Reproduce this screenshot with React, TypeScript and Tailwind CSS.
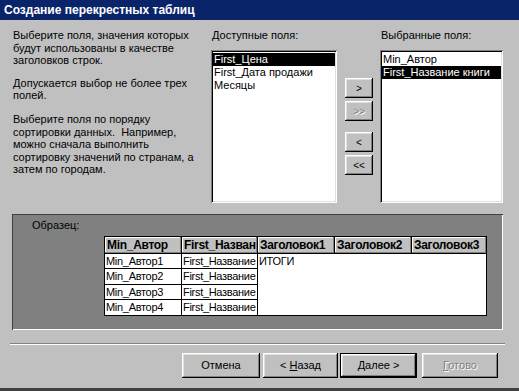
const raised =
  'shadow-[inset_-1px_-1px_#000,inset_1px_1px_#fff,inset_-2px_-2px_#808080,inset_2px_2px_#dfdfdf]';
const sunken =
  'shadow-[inset_1px_1px_#808080,inset_-1px_-1px_#fff,inset_2px_2px_#000,inset_-2px_-2px_#dfdfdf]';
const headerCell =
  'bg-[#c0c0c0] shadow-[inset_-1px_-1px_#808080,inset_1px_1px_#fff] px-[2px] font-bold text-[12px] tracking-[-0.3px] leading-[16px] whitespace-nowrap overflow-hidden';
const bodyCell = 'bg-white px-[1px] leading-[14px] tracking-[-0.3px] whitespace-nowrap overflow-hidden';
const disabledText = 'text-[#808080] [text-shadow:1px_1px_0_#fff]';

function ListBox({ items, selected }: { items: string[]; selected: number }) {
  return (
    <div className={`h-[153px] bg-white p-[2px] pt-[3px] ${sunken}`}>
      {items.map((it, i) => (
        <div
          key={it}
          className={`h-[13px] leading-[13px] pl-[1px] whitespace-nowrap ${
            i === selected ? 'bg-black text-white' : ''
          }`}
        >
          {it}
        </div>
      ))}
    </div>
  );
}

function MoveButton({ label, disabled }: { label: string; disabled?: boolean }) {
  return (
    <div
      className={`w-[28px] h-[20px] flex items-center justify-center text-[10px] ${raised} ${
        disabled ? disabledText : ''
      }`}
    >
      {label}
    </div>
  );
}

function WizardButton({
  children,
  isDefault,
  disabled,
  className = '',
}: {
  children: React.ReactNode;
  isDefault?: boolean;
  disabled?: boolean;
  className?: string;
}) {
  return (
    <div
      className={`h-[25px] flex items-center justify-center ${className} ${
        isDefault ? 'border border-black' : ''
      } ${disabled ? disabledText : ''}`}
    >
      <div className={`w-full h-full flex items-center justify-center ${raised}`}>
        <span className="whitespace-pre">{children}</span>
      </div>
    </div>
  );
}

const ROWS = ['Min_Автор1', 'Min_Автор2', 'Min_Автор3', 'Min_Автор4'];

export default function App() {
  return (
    <div className="w-[519px] h-[391px] bg-[#c0c0c0] flex flex-col overflow-hidden font-['Liberation_Sans',Arial,sans-serif] text-[11px] text-black border-b-[3px] border-[#404040]">
      <div className="h-[20px] shrink-0 bg-[#0a246a] text-white font-bold text-[12px] pl-[4px] flex items-center">
        Создание перекрестных таблиц
      </div>

      <div className="flex pt-[9px]">
        <div className="w-[211px] pl-[13px] leading-[12.6px]">
          <p>
            Выберите поля, значения которых
            <br />
            будут использованы в качестве
            <br />
            заголовков строк.
          </p>
          <p className="mt-[10px]">
            Допускается выбор не более трех
            <br />
            полей.
          </p>
          <p className="mt-[11px]">
            Выберите поля по порядку
            <br />
            {'сортировки данных.\u00a0 Например,'}
            <br />
            можно сначала выполнить
            <br />
            сортировку значений по странам, а
            <br />
            затем по городам.
          </p>
        </div>

        <div className="w-[126px]">
          <div className="h-[13px] leading-[13px] pl-[1px] mb-[8px]">Доступные поля:</div>
          <ListBox items={['First_Цена', 'First_Дата продажи', 'Месяцы']} selected={0} />
        </div>

        <div className="ml-[8px] pt-[49px] flex flex-col">
          <MoveButton label=">" />
          <div className="mt-[3px]">
            <MoveButton label=">>" disabled />
          </div>
          <div className="mt-[11px]">
            <MoveButton label="<" />
          </div>
          <div className="mt-[3px]">
            <MoveButton label="<<" />
          </div>
        </div>

        <div className="w-[123px] ml-[7px]">
          <div className="h-[13px] leading-[13px] pl-[1px] mb-[8px]">Выбранные поля:</div>
          <ListBox items={['Min_Автор', 'First_Название книги']} selected={1} />
        </div>
      </div>

      <div className="ml-[12px] mt-[11px] w-[491px] h-[116px] bg-[#808080] shadow-[inset_1px_1px_#404040,inset_-1px_-1px_#fff] pt-[5px] pl-[20px]">
        <div className="leading-[13px]">Образец:</div>
        <div className="ml-[72px] mt-[4px] w-[383px] grid grid-cols-[76px_75px_76px_76px_74px] grid-rows-[16px_14px_15px_14px_15px] gap-px border border-black bg-black">
          <div className={headerCell}>Min_Автор</div>
          <div className={headerCell}>First_Назван</div>
          <div className={headerCell}>Заголовок1</div>
          <div className={headerCell}>Заголовок2</div>
          <div className={headerCell}>Заголовок3</div>

          <div className={bodyCell}>{ROWS[0]}</div>
          <div className={bodyCell}>First_Название</div>
          <div className={`${bodyCell} col-span-3 row-span-4`}>ИТОГИ</div>
          {ROWS.slice(1).map((r) => (
            <div key={r} className="contents">
              <div className={bodyCell}>{r}</div>
              <div className={bodyCell}>First_Название</div>
            </div>
          ))}
        </div>
      </div>

      <div className="ml-[10px] mt-[13px] w-[495px] h-[2px] border-t border-[#808080] border-b border-b-white" />

      <div className="flex mt-[8px] pl-[182px]">
        <WizardButton className="w-[78px]">Отмена</WizardButton>
        <WizardButton className="w-[75px] ml-[3px]">
          {'< '}
          <span className="underline">Н</span>азад
        </WizardButton>
        <WizardButton className="w-[77px] ml-[2px]" isDefault>
          <span className="underline">Д</span>алее {'>'}
        </WizardButton>
        <WizardButton className="w-[76px] ml-[5px]" disabled>
          <span className="underline">Г</span>отово
        </WizardButton>
      </div>
    </div>
  );
}
